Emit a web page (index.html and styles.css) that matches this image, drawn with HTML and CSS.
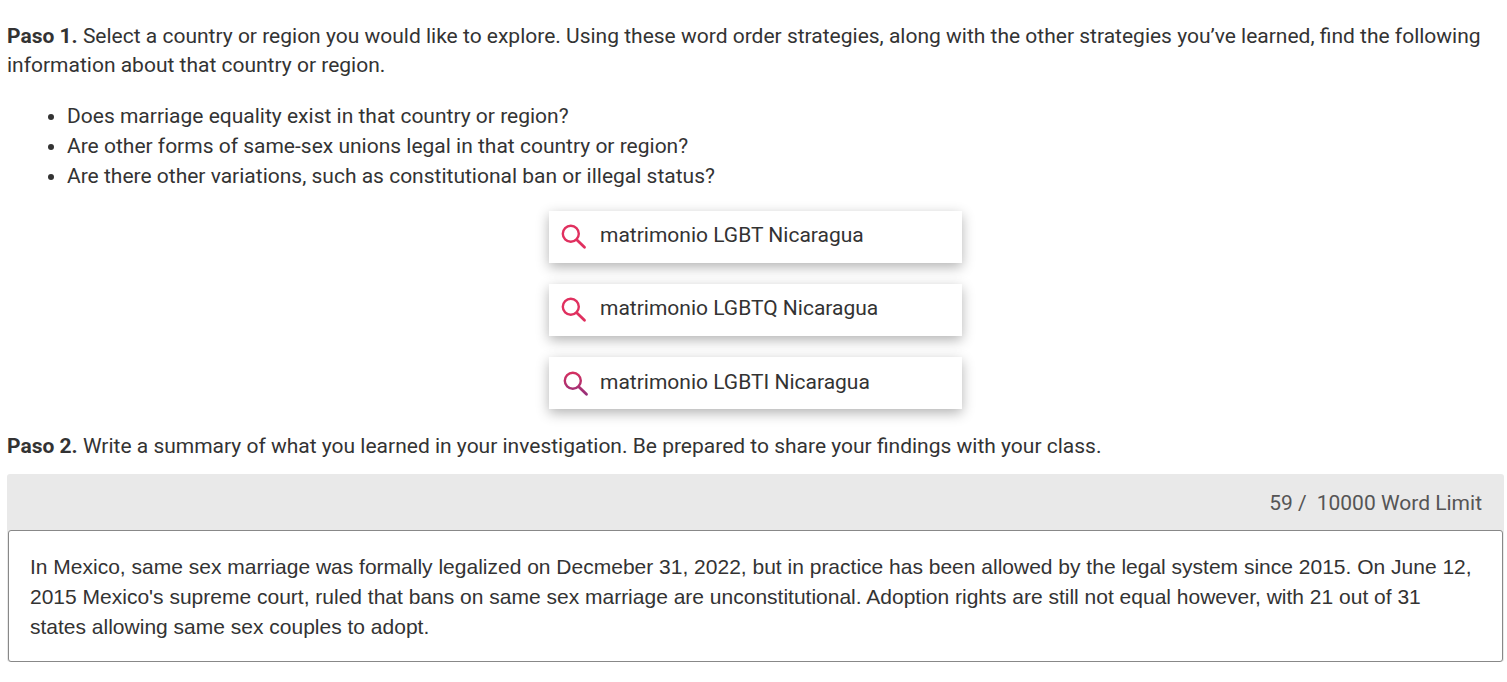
FILE: index.html
```html
<!DOCTYPE html>
<html lang="en">
<head>
  <meta charset="UTF-8">
  <meta name="viewport" content="width=device-width, initial-scale=1">
  <title>Paso 1 y Paso 2</title>
  <link rel="stylesheet" href="styles.css">
</head>
<body>
  <main>
    <p class="step"><strong>Paso 1.</strong> Select a country or region you would like to explore. Using these word order strategies, along with the other strategies you’ve learned, find the following information about that country or region.</p>

    <ul class="questions">
      <li>Does marriage equality exist in that country or region?</li>
      <li>Are other forms of same-sex unions legal in that country or region?</li>
      <li>Are there other variations, such as constitutional ban or illegal status?</li>
    </ul>

    <div class="searches">
      <label class="search-box">
        <svg class="icon" viewBox="0 0 26 26" fill="none" stroke="#e0305f" stroke-width="2.4" stroke-linecap="round" role="img" aria-label="Search">
          <circle cx="9.8" cy="9.8" r="8"/>
          <path d="M15.7 15.7l7.8 7.6" stroke-width="2.8"/>
        </svg>
        <input type="text" value="matrimonio LGBT Nicaragua">
      </label>
      <label class="search-box">
        <svg class="icon" viewBox="0 0 26 26" fill="none" stroke="#e0305f" stroke-width="2.4" stroke-linecap="round" role="img" aria-label="Search">
          <circle cx="9.8" cy="9.8" r="8"/>
          <path d="M15.7 15.7l7.8 7.6" stroke-width="2.8"/>
        </svg>
        <input type="text" value="matrimonio LGBTQ Nicaragua">
      </label>
      <label class="search-box shifted">
        <svg class="icon" viewBox="0 0 26 26" fill="none" stroke="url(#fade)" stroke-width="2.4" stroke-linecap="round" role="img" aria-label="Search">
          <defs>
            <linearGradient id="fade" gradientUnits="userSpaceOnUse" x1="0" y1="0" x2="0" y2="26">
              <stop offset="0" stop-color="#d8305f"/>
              <stop offset="1" stop-color="#91307c"/>
            </linearGradient>
          </defs>
          <circle cx="9.8" cy="9.8" r="8"/>
          <path d="M15.7 15.7l7.8 7.6" stroke-width="2.8"/>
        </svg>
        <input type="text" value="matrimonio LGBTI Nicaragua">
      </label>
    </div>

    <p class="step"><strong>Paso 2.</strong> <label for="summary">Write a summary of what you learned in your investigation. Be prepared to share your findings with your class.</label></p>

    <div class="editor">
      <div class="word-count"><span>59 /</span><span>10000 Word Limit</span></div>
      <textarea id="summary" rows="3">In Mexico, same sex marriage was formally legalized on Decmeber 31, 2022, but in practice has been allowed by the legal system since 2015. On June 12, 2015 Mexico's supreme court, ruled that bans on same sex marriage are unconstitutional. Adoption rights are still not equal however, with 21 out of 31 states allowing same sex couples to adopt.</textarea>
    </div>
  </main>
</body>
</html>
```

FILE: styles.css
```css
* {
  margin: 0;
  padding: 0;
  box-sizing: border-box;
}
body {
  background: #fff;
  color: #333;
  font-family: Roboto, sans-serif;
  font-size: 21px;
  line-height: 30px;
}
main {
  padding: 22px 3px 20px 7px;
}
.step {
  line-height: 29px;
}
.questions {
  margin: 21px 0 20px;
  padding-left: 60px;
}
.searches {
  display: flex;
  flex-direction: column;
  align-items: center;
  gap: 21px;
  margin-bottom: 23px;
}
.search-box {
  display: flex;
  align-items: center;
  gap: 13px;
  width: 413px;
  max-width: 100%;
  height: 52px;
  padding: 0 12px;
  background: #fff;
  box-shadow: 0 4px 12px rgba(0, 0, 0, 0.3);
}
.search-box.shifted {
  gap: 11px;
  padding: 2px 12px 0 14px;
}
.icon {
  flex: none;
  width: 26px;
  height: 26px;
}
input {
  flex: 1;
  min-width: 0;
  height: 48px;
  padding-bottom: 4px;
  border: none;
  background: none;
  color: inherit;
  font: inherit;
}
.editor {
  margin-top: 13px;
  padding: 0 1px;
  background: #e9e9e9;
  border-radius: 3px;
}
.word-count {
  display: flex;
  justify-content: flex-end;
  gap: 10px;
  padding: 14px 21px 12px;
  color: #555;
}
textarea {
  display: block;
  width: 100%;
  padding: 21px 24px 19px 21px;
  border: 1px solid #888;
  border-radius: 3px;
  background: #fff;
  color: #333;
  font-family: "Liberation Sans", Arial, sans-serif;
  font-size: 21px;
  line-height: 30px;
  resize: none;
}
```
